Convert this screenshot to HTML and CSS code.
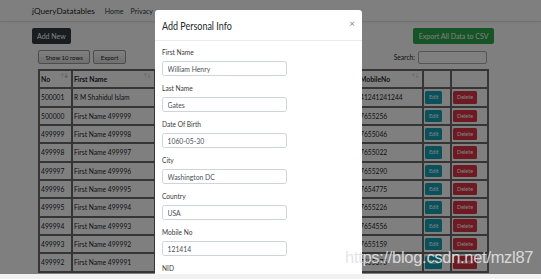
FILE: index.html
```html
<!DOCTYPE html>
<html lang="en">
<head>
  <meta charset="UTF-8">
  <meta name="viewport" content="width=device-width, initial-scale=1.0">
  <title>jQueryDatatables</title>
  <link rel="stylesheet" href="styles.css">
</head>
<body>
  <div class="screen">
    <header class="navbar">
      <a class="brand">jQueryDatatables</a>
      <nav class="nav-links">
        <a>Home</a>
        <a>Privacy</a>
      </nav>
    </header>

    <main class="container">
      <div class="top-actions">
        <button class="btn btn-dark">Add New</button>
        <button class="btn btn-success">Export All Data to CSV</button>
      </div>

      <div class="dt-wrapper">
        <div class="dt-toolbar">
          <div class="dt-buttons">
            <button class="dt-button">Show 10 rows</button>
            <button class="dt-button">Export</button>
          </div>
          <label class="dt-search">Search: <input type="search"></label>
        </div>

        <table class="data-table">
          <colgroup>
            <col class="c-no">
            <col class="c-first">
            <col class="c-last">
            <col class="c-dob">
            <col class="c-city">
            <col class="c-country">
            <col class="c-mobile">
            <col class="c-edit">
            <col class="c-delete">
          </colgroup>
          <thead>
            <tr>
              <th>No<span class="sort sort-desc">↑<b>↓</b></span></th>
              <th>First Name<span class="sort">↑↓</span></th>
              <th>Last Name<span class="sort">↑↓</span></th>
              <th>Date Of Birth<span class="sort">↑↓</span></th>
              <th>City<span class="sort">↑↓</span></th>
              <th>Country<span class="sort">↑↓</span></th>
              <th>MobileNo<span class="sort">↑↓</span></th>
              <th></th>
              <th></th>
            </tr>
          </thead>
          <tbody>
            <tr><td>500001</td><td>R M Shahidul Islam</td><td>Shahidul</td><td>1985-01-12</td><td>Dhaka</td><td>Bangladesh</td><td>41241241244</td><td><button class="btn btn-edit">Edit</button></td><td><button class="btn btn-delete">Delete</button></td></tr>
            <tr><td>500000</td><td>First Name 499999</td><td>Last Name 499999</td><td>1990-03-04</td><td>City</td><td>Country</td><td>7655256</td><td><button class="btn btn-edit">Edit</button></td><td><button class="btn btn-delete">Delete</button></td></tr>
            <tr><td>499999</td><td>First Name 499998</td><td>Last Name 499998</td><td>1990-03-04</td><td>City</td><td>Country</td><td>7655046</td><td><button class="btn btn-edit">Edit</button></td><td><button class="btn btn-delete">Delete</button></td></tr>
            <tr><td>499998</td><td>First Name 499997</td><td>Last Name 499997</td><td>1990-03-04</td><td>City</td><td>Country</td><td>7655022</td><td><button class="btn btn-edit">Edit</button></td><td><button class="btn btn-delete">Delete</button></td></tr>
            <tr><td>499997</td><td>First Name 499996</td><td>Last Name 499996</td><td>1990-03-04</td><td>City</td><td>Country</td><td>7655290</td><td><button class="btn btn-edit">Edit</button></td><td><button class="btn btn-delete">Delete</button></td></tr>
            <tr><td>499996</td><td>First Name 499995</td><td>Last Name 499995</td><td>1990-03-04</td><td>City</td><td>Country</td><td>7654775</td><td><button class="btn btn-edit">Edit</button></td><td><button class="btn btn-delete">Delete</button></td></tr>
            <tr><td>499995</td><td>First Name 499994</td><td>Last Name 499994</td><td>1990-03-04</td><td>City</td><td>Country</td><td>7655226</td><td><button class="btn btn-edit">Edit</button></td><td><button class="btn btn-delete">Delete</button></td></tr>
            <tr><td>499994</td><td>First Name 499993</td><td>Last Name 499993</td><td>1990-03-04</td><td>City</td><td>Country</td><td>7654556</td><td><button class="btn btn-edit">Edit</button></td><td><button class="btn btn-delete">Delete</button></td></tr>
            <tr><td>499993</td><td>First Name 499992</td><td>Last Name 499992</td><td>1990-03-04</td><td>City</td><td>Country</td><td>7655159</td><td><button class="btn btn-edit">Edit</button></td><td><button class="btn btn-delete">Delete</button></td></tr>
            <tr><td>499992</td><td>First Name 499991</td><td>Last Name 499991</td><td>1990-03-04</td><td>City</td><td>Country</td><td>7655375</td><td><button class="btn btn-edit">Edit</button></td><td><button class="btn btn-delete">Delete</button></td></tr>
          </tbody>
        </table>
      </div>
    </main>

    <div class="backdrop"></div>

    <!-- Add Personal Info Modal -->
    <div class="modal">
      <div class="modal-header">
        <h3>Add Personal Info</h3>
        <span class="close">&times;</span>
      </div>
      <div class="modal-body">
        <div class="form-group">
          <label>First Name</label>
          <input type="text" value="William Henry">
        </div>
        <div class="form-group">
          <label>Last Name</label>
          <input type="text" value="Gates">
        </div>
        <div class="form-group">
          <label>Date Of Birth</label>
          <input type="text" value="1060-05-30">
        </div>
        <div class="form-group">
          <label>City</label>
          <input type="text" value="Washington DC">
        </div>
        <div class="form-group">
          <label>Country</label>
          <input type="text" value="USA">
        </div>
        <div class="form-group">
          <label>Mobile No</label>
          <input type="text" value="121414">
        </div>
        <div class="form-group">
          <label>NID</label>
          <input type="text" value="">
        </div>
      </div>
    </div>

    <div class="watermark">https://blog.csdn.net/mzl87</div>
  </div>
  <div class="hscroll"></div>
</body>
</html>
```

FILE: styles.css
```css
* {
  box-sizing: border-box;
}

body {
  margin: 0;
  font-family: 'Lato', 'Open Sans', sans-serif;
  color: #212529;
  background: #fff;
}

.screen {
  position: relative;
  height: 274px;
  overflow: hidden;
}

/* Navbar */
.navbar {
  height: 22px;
  display: flex;
  align-items: center;
  padding: 0 32px;
  border-bottom: 1px solid #dee2e6;
  box-shadow: 0 1px 3px rgba(0, 0, 0, 0.05);
}

.brand {
  font-size: 8.2px;
  color: rgba(0, 0, 0, 0.9);
  margin-right: 10px;
}

.nav-links {
  display: flex;
  gap: 7px;
  font-size: 7px;
  color: #343a40;
}

/* Page */
.container {
  padding: 6px 47px 0 32px;
}

.top-actions {
  display: flex;
  justify-content: space-between;
}

.btn {
  border: none;
  border-radius: 2px;
  color: #fff;
  font-family: inherit;
  cursor: pointer;
}

.btn-dark {
  height: 16px;
  padding: 0 5px;
  font-size: 7px;
  background: #343a40;
}

.btn-success {
  height: 16px;
  padding: 0 5.5px;
  font-size: 7px;
  background: #2aa84a;
}

.dt-wrapper {
  margin: 6px 7px 0 6px;
}

.dt-toolbar {
  display: flex;
  justify-content: space-between;
  align-items: center;
  height: 14px;
  margin-bottom: 5px;
}

.dt-buttons {
  display: flex;
  gap: 3px;
}

.dt-button {
  height: 14px;
  padding: 0 6.5px;
  font-family: inherit;
  font-size: 6px;
  color: #222;
  background: linear-gradient(#fff, #e0e0e0);
  border: 1px solid #999;
  border-radius: 2px;
}

.dt-search {
  display: flex;
  align-items: center;
  gap: 3px;
  font-size: 6.7px;
}

.dt-search input {
  width: 69px;
  height: 13px;
  border: 1px solid #aaa;
  border-radius: 2px;
  background: #fff;
}

/* Table */
.data-table {
  width: 449px;
  table-layout: fixed;
  border-collapse: collapse;
  font-size: 6.7px;
}

.c-no { width: 33px; }
.c-first { width: 83px; }
.c-last { width: 60px; }
.c-dob { width: 50px; }
.c-city { width: 47px; }
.c-country { width: 46px; }
.c-mobile { width: 65px; }
.c-edit { width: 28px; }
.c-delete { width: 37px; }

.data-table th,
.data-table td {
  border: 2px solid #6a6a6a;
  padding: 0 1px;
  height: 18.33px;
  white-space: nowrap;
  overflow: hidden;
  text-align: left;
  vertical-align: middle;
}

.data-table th {
  position: relative;
  font-size: 6.8px;
  font-weight: 700;
}

.sort {
  position: absolute;
  top: 1px;
  right: 3px;
  font-size: 5px;
  font-weight: 400;
  color: #bbb;
}

.sort-desc b {
  font-weight: 400;
  color: #666;
}

.btn-edit,
.btn-delete {
  height: 12.6px;
  padding: 0 4px;
  font-size: 5.5px;
  border-radius: 1.5px;
}

.btn-edit {
  background: #17a2b8;
}

.btn-delete {
  background: #dc3545;
}

/* Modal Styles */
.backdrop {
  position: absolute;
  inset: 0;
  background: rgba(0, 0, 0, 0.5);
}

.modal {
  position: absolute;
  left: 155px;
  top: 10px;
  width: 207px;
  height: 330px;
  background: #fff;
  border-radius: 3px;
}

.modal-header {
  height: 31px;
  display: flex;
  justify-content: space-between;
  align-items: center;
  padding: 0 7px;
  border-bottom: 1px solid #e9ecef;
}

.modal-header h3 {
  margin: 0;
  font-size: 11.5px;
  font-weight: 400;
  color: #212529;
  transform: scaleX(0.78);
  transform-origin: left center;
}

.close {
  font-size: 10px;
  color: rgba(0, 0, 0, 0.5);
  margin-top: -4px;
}

.modal-body {
  padding: 7px;
}

.form-group {
  margin-bottom: 8px;
}

.form-group label {
  display: block;
  font-size: 6.6px;
  line-height: 9px;
  margin-bottom: 4px;
  color: #3a3a3a;
}

.form-group input {
  display: block;
  width: 125px;
  height: 15px;
  padding: 0 4.5px;
  font-family: inherit;
  font-size: 6.8px;
  color: #495057;
  border: 1px solid #ced4da;
  border-radius: 2.5px;
}

.watermark {
  position: absolute;
  left: 345px;
  top: 248px;
  font-family: 'Liberation Sans', Arial, sans-serif;
  font-size: 16.5px;
  letter-spacing: -0.3px;
  color: rgba(226, 226, 226, 0.92);
}

.hscroll {
  height: 5px;
  background: #f1f1f1;
}
```
